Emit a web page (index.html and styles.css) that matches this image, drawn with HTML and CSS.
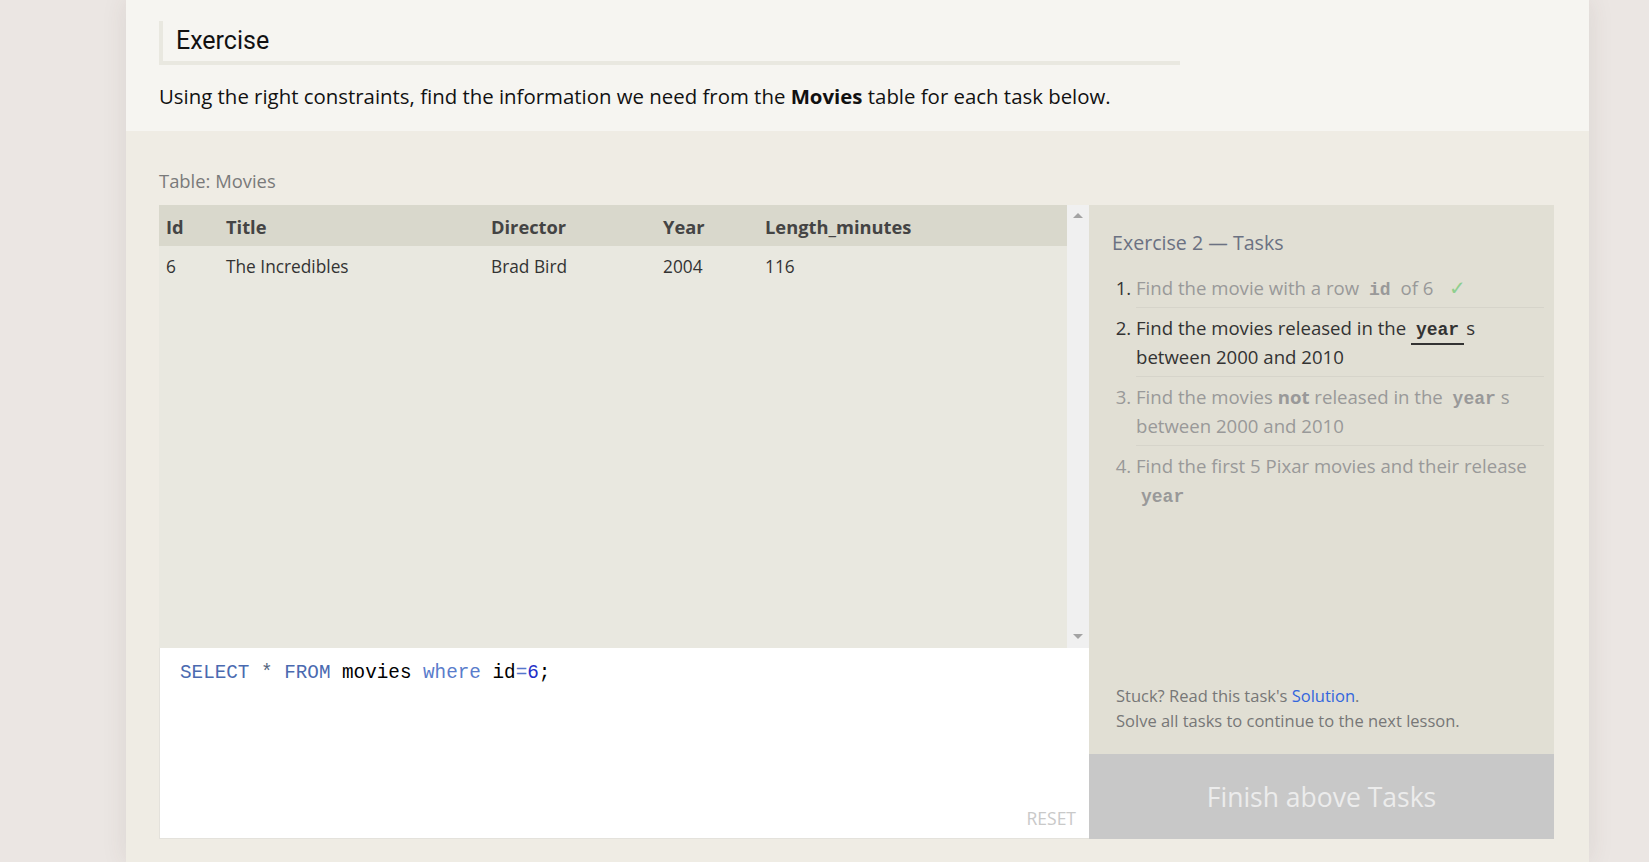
FILE: index.html
```html
<!DOCTYPE html>
<html lang="en">
<head>
<meta charset="utf-8">
<title>SQL Exercise</title>
<link rel="stylesheet" href="styles.css">
</head>
<body>
<div class="page">
  <div class="panel">
    <section class="intro">
      <h2 class="ex-title">Exercise</h2>
      <p class="ex-desc">Using the right constraints, find the information we need from the <strong>Movies</strong> table for each task below.</p>
    </section>
    <section class="workspace">
      <div class="table-label">Table: Movies</div>
      <div class="work-grid">
        <div class="left-col">
          <div class="table-view">
            <div class="table-scroll">
              <table class="data">
                <thead>
                  <tr><th class="c-id">Id</th><th class="c-title">Title</th><th class="c-dir">Director</th><th class="c-year">Year</th><th>Length_minutes</th></tr>
                </thead>
                <tbody>
                  <tr><td>6</td><td>The Incredibles</td><td>Brad Bird</td><td>2004</td><td>116</td></tr>
                </tbody>
              </table>
            </div>
            <div class="scrollbar">
              <span class="arrow up"></span>
              <span class="arrow down"></span>
            </div>
          </div>
          <div class="editor">
            <pre class="code"><span class="kw">SELECT</span> <span class="op">*</span> <span class="kw">FROM</span> movies <span class="kw2">where</span> id<span class="eq">=</span><span class="num">6</span>;</pre>
            <span class="reset">RESET</span>
          </div>
        </div>
        <div class="right-col">
          <div class="tasks">
            <div class="tasks-title">Exercise 2 — Tasks</div>
            <ol class="task-list">
              <li class="done">Find the movie with a row <code>id</code> of 6 <span class="check">✓</span></li>
              <li class="current">Find the movies released in the <code class="hl">year</code>s between 2000 and 2010</li>
              <li class="todo">Find the movies <strong>not</strong> released in the <code>year</code>s between 2000 and 2010</li>
              <li class="todo">Find the first 5 Pixar movies and their release <code>year</code></li>
            </ol>
            <div class="help">
              <div>Stuck? Read this task's <a class="sol">Solution</a>.</div>
              <div>Solve all tasks to continue to the next lesson.</div>
            </div>
          </div>
          <div class="finish">Finish above Tasks</div>
        </div>
      </div>
    </section>
  </div>
</div>
</body>
</html>
```

FILE: styles.css
```css
html, body {
  margin: 0;
  padding: 0;
}
body {
  background: #ebe6e3;
  font-family: "Open Sans", "Noto Sans", sans-serif;
  color: #222;
  height: 862px;
  overflow: hidden;
}
.page {
  padding-left: 126px;
}
.panel {
  width: 1463px;
  box-shadow: 0 0 24px rgba(80, 60, 50, 0.10);
  background: #efece4;
  min-height: 862px;
}
.intro {
  background: #f6f5f1;
  padding: 21px 33px 0 33px;
  height: 110px;
}
.ex-title {
  margin: 0;
  width: 1004px;
  border-left: 4px solid #e9e8e0;
  border-bottom: 4px solid #e9e8e0;
  padding-left: 13px;
  font-family: "Roboto", sans-serif;
  font-weight: 400;
  font-size: 25px;
  line-height: 40px;
  color: #111;
}
.ex-desc {
  margin: 16px 0 0 0;
  font-size: 20.4px;
  line-height: 30px;
  color: #111;
}
.ex-desc strong {
  font-weight: 700;
}
.workspace {
  padding: 38px 34px 0 33px;
}
.table-label {
  font-size: 18.4px;
  line-height: 24px;
  color: #7a7a7a;
  margin-bottom: 12px;
}
.work-grid {
  display: grid;
  grid-template-columns: 930px 465px;
}
.left-col {
  display: flex;
  flex-direction: column;
}
.table-view {
  display: flex;
  height: 443px;
  background: #e9e8e0;
}
.table-scroll {
  flex: 1;
}
.data {
  border-collapse: collapse;
  table-layout: fixed;
  width: 100%;
  font-size: 17.3px;
  color: #333;
}
.data th {
  background: #d9d8cc;
  text-align: left;
  font-weight: 700;
  height: 41px;
  padding: 2px 0 0 0;
  box-sizing: border-box;
  color: #444;
  font-size: 18.3px;
}
.data td {
  height: 40px;
  padding: 0;
}
.data th:first-child, .data td:first-child {
  padding-left: 7px;
}
.c-id { width: 67px; }
.c-title { width: 265px; }
.c-dir { width: 172px; }
.c-year { width: 102px; }
.scrollbar {
  width: 22px;
  background: #f0f0f0;
  display: flex;
  flex-direction: column;
  justify-content: space-between;
  align-items: center;
  padding: 8px 0 9px;
  box-sizing: border-box;
}
.arrow {
  width: 0;
  height: 0;
  border-left: 5px solid transparent;
  border-right: 5px solid transparent;
}
.arrow.up { border-bottom: 5px solid #a3a3a3; }
.arrow.down { border-top: 5px solid #a3a3a3; }
.editor {
  height: 191px;
  box-sizing: border-box;
  background: #fff;
  border-left: 1px solid #e4e2dc;
  border-bottom: 1px solid #e4e2dc;
  display: flex;
  flex-direction: column;
  padding: 12px 13px 10px 20px;
}
.code {
  margin: 0;
  font-family: "Liberation Mono", monospace;
  font-size: 19.3px;
  line-height: 26px;
  color: #000;
  flex: 1;
}
.kw { color: #4a6ab0; }
.op { color: #55657f; }
.kw2 { color: #5a7ccb; }
.eq { color: #5577cc; }
.num { color: #1f2fc8; }
.reset {
  align-self: flex-end;
  font-size: 17.5px;
  color: #c9c9c9;
  line-height: 20px;
}
.right-col {
  display: flex;
  flex-direction: column;
}
.tasks {
  height: 549px;
  background: #e1dfd4;
  box-sizing: border-box;
  padding: 24px 10px 0 23px;
  display: flex;
  flex-direction: column;
}
.tasks-title {
  font-size: 19.6px;
  line-height: 28px;
  color: #6b7182;
}
.task-list {
  margin: 11px 0 0 0;
  padding: 0 0 0 24px;
  font-size: 18.6px;
  line-height: 29px;
}
.task-list li {
  padding: 5px 0 5px 0;
  border-bottom: 1px solid #d6d4ca;
  color: #999;
}
.task-list li:last-child {
  border-bottom: none;
}
.task-list li.done::marker { color: #333; }
.task-list li.current { color: #333; }
.task-list code {
  font-family: "Liberation Mono", monospace;
  font-weight: 700;
  font-size: 18px;
  line-height: 18px;
  margin: 0 5px;
}
.task-list code.hl {
  border-bottom: 2px solid #333;
  margin: 0 2px 0 0;
  padding: 0 5px 3px 5px;
}
.task-list strong {
  font-weight: 700;
}
.check {
  color: #8fcf8f;
  margin-left: 11px;
  font-size: 20px;
  line-height: 20px;
}
.help {
  margin-top: auto;
  padding: 0 0 21px 4px;
  font-size: 16.5px;
  line-height: 25px;
  color: #777;
}
.sol {
  color: #3366dd;
  text-decoration: none;
}
.finish {
  height: 85px;
  background: #c8c8c8;
  color: #ececec;
  font-size: 26.5px;
  display: flex;
  align-items: center;
  justify-content: center;
}
```
